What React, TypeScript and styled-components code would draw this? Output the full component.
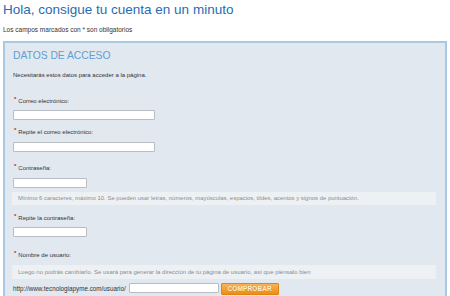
import React from "react";
import styled, { createGlobalStyle } from "styled-components";

const GlobalStyle = createGlobalStyle`
  html, body {
    margin: 0;
    padding: 0;
    background: #ffffff;
    font-family: "Liberation Sans", Arial, sans-serif;
  }
`;

const Page = styled.div`
  width: 450px;
  height: 296px;
  overflow: hidden;
  padding: 0 3px;
  box-sizing: border-box;
`;

const Title = styled.h1`
  margin: 0;
  font-size: 13.5px;
  line-height: 20px;
  font-weight: normal;
  color: #1d6db4;
`;

const Notice = styled.p`
  margin: 6px 0 0;
  font-size: 6.5px;
  line-height: 8px;
  color: #333;
`;

const Panel = styled.section`
  margin-top: 7px;
  width: 444px;
  box-sizing: border-box;
  border: 2px solid #a9c9e3;
  border-bottom: none;
  background: #e1e8ef;
  padding: 7px 9px 0 8px;
  height: 260px;
`;

const Heading = styled.h2`
  margin: 0;
  font-size: 10.3px;
  line-height: 12px;
  font-weight: normal;
  color: #5e9fd6;
`;

const Intro = styled.p`
  margin: 9px 0 0;
  font-size: 6px;
  line-height: 8px;
  color: #333;
`;

const Field = styled.div<{ $space: number }>`
  margin-top: ${(p) => p.$space}px;
  display: flex;
  flex-direction: column;
  align-items: flex-start;
`;

const Label = styled.label<{ $gap: number }>`
  display: block;
  font-size: 6px;
  line-height: 8px;
  color: #333;
  margin-bottom: ${(p) => p.$gap}px;
`;

const Star = styled.span`
  color: #d3122e;
  font-weight: bold;
  font-size: 6px;
  position: relative;
  top: -2px;
  margin: 0 2px 0 1px;
`;

const Input = styled.input<{ $w: number }>`
  display: block;
  width: ${(p) => p.$w}px;
  height: 10px;
  box-sizing: border-box;
  margin: 0;
  padding: 0 2px;
  border: 1px solid #b9bdc2;
  border-radius: 1px;
  background: #fff;
  font-size: 6px;
  outline: none;
`;

const Hint = styled.div<{ $h: number; $top: number; $size: number }>`
  align-self: stretch;
  margin: ${(p) => p.$top}px 0 0 -1px;
  height: ${(p) => p.$h}px;
  box-sizing: border-box;
  padding: 0 6px;
  display: flex;
  align-items: center;
  background: #eef1f4;
  border-radius: 1px;
  font-size: ${(p) => p.$size}px;
  color: #8a8d91;
  white-space: nowrap;
`;

const UrlRow = styled.div`
  margin-top: 3px;
  display: flex;
  align-items: center;
  gap: 2px;
`;

const UrlText = styled.span`
  font-size: 6.3px;
  color: #333;
  white-space: nowrap;
  margin-right: 1px;
`;

const Button = styled.button`
  width: 58px;
  height: 12px;
  margin: 1px 0 0;
  padding: 0;
  border: 1px solid #e08412;
  border-radius: 1px;
  background: linear-gradient(#fbb455, #ee8c17);
  color: #fff6dc;
  font-family: "Liberation Sans", Arial, sans-serif;
  font-weight: bold;
  font-size: 6.5px;
  line-height: 10px;
  letter-spacing: 0.1px;
  text-shadow: 0 0 1px #c86c00;
`;

export default function App() {
  return (
    <Page>
      <GlobalStyle />
      <Title>Hola, consigue tu cuenta en un minuto</Title>
      <Notice>Los campos marcados con * son obligatorios</Notice>
      <Panel>
        <Heading>DATOS DE ACCESO</Heading>
        <Intro>Necesitarás estos datos para acceder a la página.</Intro>

        <Field $space={17.5}>
          <Label $gap={5}>
            <Star>*</Star>Correo electrónico:
          </Label>
          <Input $w={142} />
        </Field>

        <Field $space={8.5}>
          <Label $gap={6}>
            <Star>*</Star>Repite el correo electrónico:
          </Label>
          <Input $w={142} />
        </Field>

        <Field $space={11.5}>
          <Label $gap={6}>
            <Star>*</Star>Contraseña:
          </Label>
          <Input $w={74} />
          <Hint $h={13.5} $top={4} $size={5.95}>
            Mínimo 6 caracteres, máximo 10. Se pueden usar letras, números,
            mayúsculas, espacios, tildes, acentos y signos de puntuación.
          </Hint>
        </Field>

        <Field $space={9}>
          <Label $gap={4.7}>
            <Star>*</Star>Repite la contraseña:
          </Label>
          <Input $w={74} />
        </Field>

        <Field $space={14}>
          <Label $gap={6}>
            <Star>*</Star>Nombre de usuario:
          </Label>
          <Hint $h={14} $top={0} $size={6}>
            Luego no podrás cambiarlo. Se usará para generar la dirección de tu
            página de usuario, así que piénsalo bien
          </Hint>
          <UrlRow>
            <UrlText>http://www.tecnologiapyme.com/usuario/</UrlText>
            <Input $w={90} />
            <Button>COMPROBAR</Button>
          </UrlRow>
        </Field>
      </Panel>
    </Page>
  );
}
